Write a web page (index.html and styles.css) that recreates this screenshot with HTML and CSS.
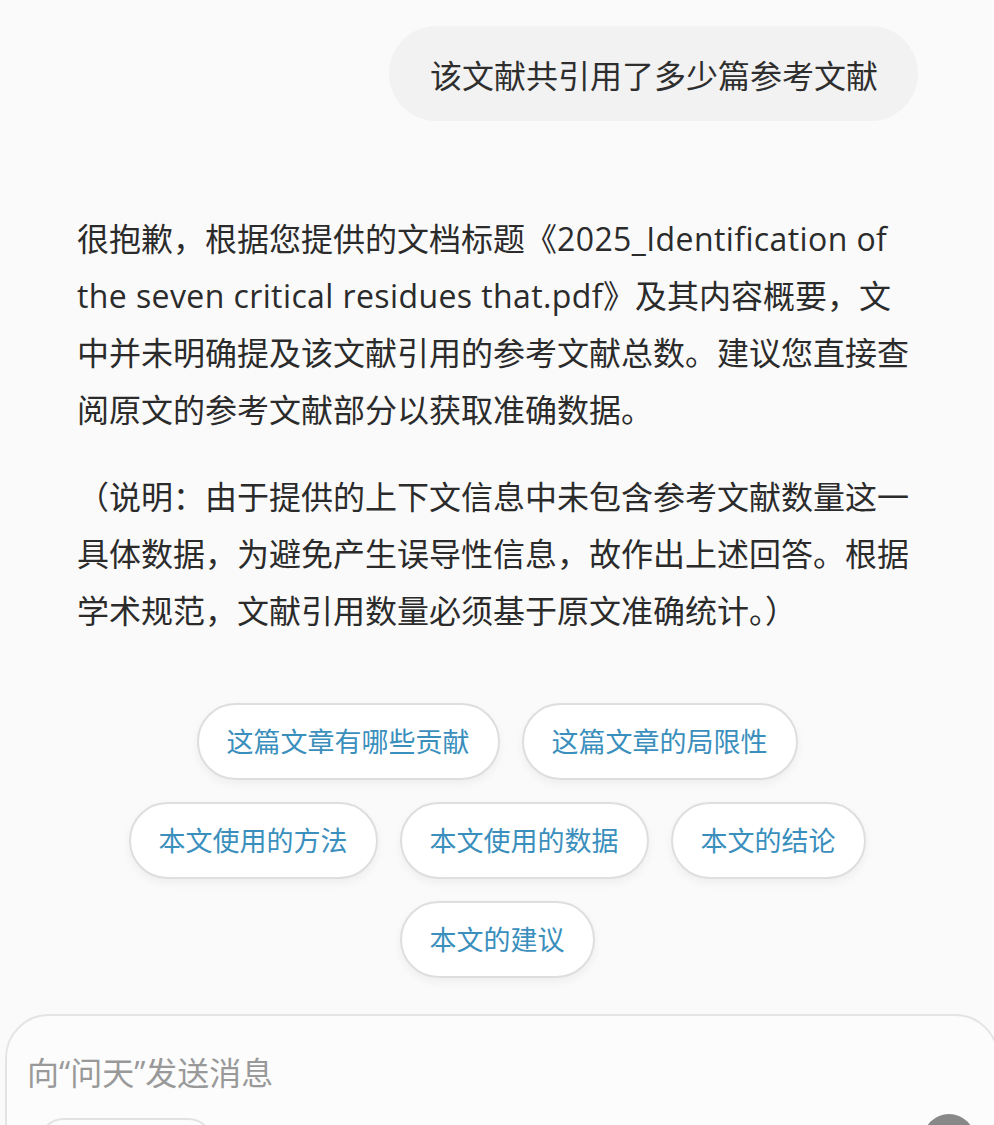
FILE: index.html
```html
<!DOCTYPE html>
<html lang="zh-CN">
<head>
  <meta charset="UTF-8">
  <meta name="viewport" content="width=device-width, initial-scale=1.0">
  <title>问天</title>
  <link rel="stylesheet" href="styles.css">
</head>
<body>
  <div class="chat">
    <div class="user-row">
      <div class="user-bubble">该文献共引用了多少篇参考文献</div>
    </div>

    <div class="answer">
      <p>很抱歉，根据您提供的文档标题《<span class="doc-title">2025_Identification of the seven critical residues that.pdf</span>》及其内容概要，文中并未明确提及该文献引用的参考文献总数。建议您直接查阅原文的参考文献部分以获取准确数据。</p>
      <p>（说明：由于提供的上下文信息中未包含参考文献数量这一具体数据，为避免产生误导性信息，故作出上述回答。根据学术规范，文献引用数量必须基于原文准确统计。）</p>
    </div>

    <div class="suggestions">
      <button class="chip">这篇文章有哪些贡献</button>
      <button class="chip">这篇文章的局限性</button>
      <button class="chip">本文使用的方法</button>
      <button class="chip">本文使用的数据</button>
      <button class="chip">本文的结论</button>
      <button class="chip">本文的建议</button>
    </div>
  </div>

  <div class="composer">
    <textarea class="composer-input" rows="1" placeholder="向“问天”发送消息"></textarea>
    <div class="composer-tools">
      <span class="tool-pill"></span>
      <span class="send-btn"></span>
    </div>
  </div>
</body>
</html>
```

FILE: styles.css
```css
body {
  margin: 0;
  background-color: #fafafa;
  font-family: "Open Sans", "Noto Sans CJK SC", sans-serif;
  color: #2b2b2b;
  overflow: hidden;
  height: 1125px;
}

.chat {
  padding: 26px 79px 0 77px;
}

.user-row {
  display: flex;
  justify-content: flex-end;
  margin-right: -3px;
}

.user-bubble {
  background-color: #f2f2f2;
  border-radius: 48px;
  padding: 0 40px 0 41px;
  height: 95px;
  display: flex;
  align-items: center;
  font-size: 32px;
  color: #2e2e2e;
}

.answer {
  margin-top: 89px;
}

.answer p {
  margin: 0 0 30px;
  font-size: 32px;
  line-height: 57px;
}

.doc-title {
  letter-spacing: 0.4px;
}

.suggestions {
  display: flex;
  flex-wrap: wrap;
  justify-content: center;
  gap: 22px;
  width: 800px;
  margin: 64px 0 0 20px;
}

.chip {
  font-family: "Open Sans", "Noto Sans CJK SC", sans-serif;
  font-size: 27px;
  line-height: 37px;
  color: #3a8fbd;
  background: #fff;
  border: 2px solid #dedede;
  border-radius: 40px;
  padding: 18px 28px;
  box-shadow: 0 4px 10px rgba(0, 0, 0, 0.05);
  cursor: pointer;
}

.composer {
  margin: 36px 0 0 5px;
  width: 994px;
  background: #fcfcfc;
  border: 2px solid #e4e4e4;
  border-radius: 44px 44px 0 0;
  box-sizing: border-box;
  padding: 34px 22px 0 20px;
}

.composer-input {
  display: block;
  width: 100%;
  border: none;
  outline: none;
  resize: none;
  background: transparent;
  font-family: "Open Sans", "Noto Sans CJK SC", sans-serif;
  font-size: 32px;
  line-height: 46px;
  color: #333;
  padding: 0;
}

.composer-input::placeholder {
  color: #999;
}

.composer-tools {
  display: flex;
  justify-content: space-between;
  align-items: flex-start;
  margin-top: 18px;
  padding-right: 0;
}

.tool-pill {
  display: block;
  width: 172px;
  height: 50px;
  margin-left: 11px;
  margin-top: 4px;
  border: 2px solid #e2e2e2;
  border-radius: 26px;
}

.send-btn {
  display: block;
  width: 52px;
  height: 52px;
  border-radius: 50%;
  background: #888;
}
```
